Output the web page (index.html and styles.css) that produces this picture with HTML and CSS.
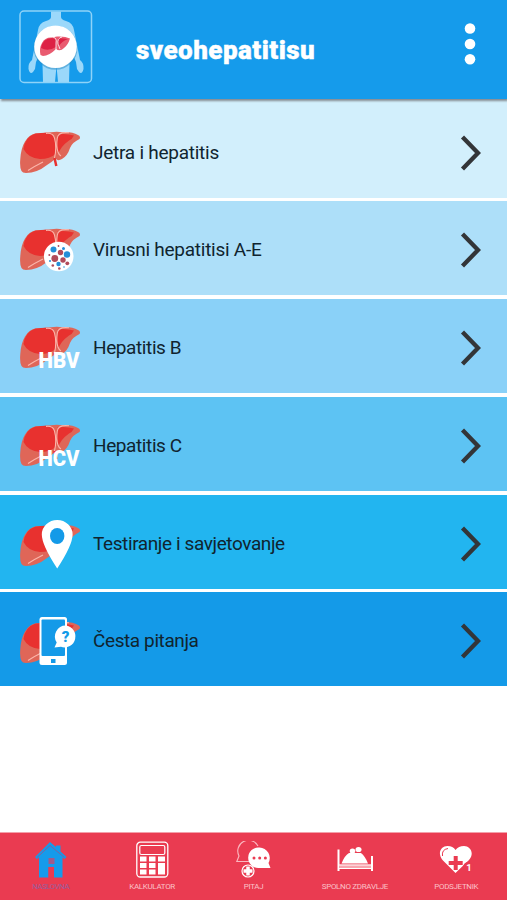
FILE: index.html
```html
<!DOCTYPE html>
<html lang="hr">
<head>
<meta charset="utf-8">
<title>sveohepatitisu</title>
<link rel="stylesheet" href="styles.css">
</head>
<body>
<svg class="defs" width="0" height="0">
  <symbol id="liver" viewBox="0 0 60 50">
    <path fill="#df6658" d="M1.500 43Q-.5 39 .3 31Q1 20 5 13.500Q9 6.500 16 5.300Q27 4.900 31 4.200Q37 3.200 42 4.200Q52 3.500 58 7Q61 8.500 59.500 11Q52 14.500 50 20Q47.500 28 42 31Q38 33.500 35.500 30.500Q32 34 27 37Q17 45 6 45Q2.500 45 1.500 43Z"/>
    <path fill="#e8312f" d="M3.500 21Q5 9 15 5.700Q27 4 32 5.500Q35.500 9 35.500 15V26Q30 31 20 31Q8 30 3.500 21ZM37.500 6.500Q45 5 54 7.500Q52 11.500 49 12.500Q40 19 38.500 26Q36 15 37.500 6.500Z"/>
    <path fill="none" stroke="#e8312f" stroke-width="2.500" d="M34.500 30L36.300 38"/>
    <path fill="none" stroke="#fbb5aa" stroke-width="1.100" d="M26 5.400Q33 4.600 34.500 10Q37 19 34.500 30M49 4.800Q38 3.600 37.300 10Q36 19 38 24Q39 27 41 28M8 42.500Q14 38.500 23 34"/>
  </symbol>
  <symbol id="arrow" viewBox="0 0 22 36">
    <path fill="none" stroke="#333538" stroke-width="4.300" d="M2.500 2L18 18L2.500 34"/>
  </symbol>
</svg>
<header class="header">
  <svg class="logo" viewBox="0 0 74 74">
    <g fill="#9bd8fa">
      <path d="M32 1.500H42V7Q42 9.500 47 11Q54 13 55 20L57 30L61 50Q65 53 64.500 59Q63 65 60 62L58 59L57 52L51 38L50.500 54L50 72H39L37.500 56L36 72H24L23.500 54L23 38L17 52L16 59L14 62Q11 65 9.500 59Q9 53 13 50L17 30L19 20Q20 13 27 11Q32 9.500 32 7Z"/>
    </g>
    <rect x="1" y="1" width="71.500" height="71.500" rx="4" fill="none" stroke="#8fd3f8" stroke-width="1.500"/>
    <circle cx="36.500" cy="37.800" r="22" fill="#3192c8" opacity=".55"/>
    <circle cx="36.500" cy="36.800" r="21.300" fill="#fff"/>
    <path fill="#e95b70" d="M21.500 45Q20 38 23 33Q26 27 33 27.500L38 26.500Q46 26 51 28.500Q49 35 45 38Q41 42 37 39Q30 46 24 46Z"/>
    <path fill="#dd2144" d="M22 38Q24 28 33 28L37 29V37Q29 42 22 38ZM39 28L49 29Q43 31 39 37Z"/>
    <path fill="none" stroke="#fff" stroke-width=".8" d="M34 27Q38 28 37 33V42M43 27Q38 28 39 34L41 39"/>
  </svg>
  <h1 class="title">sveohepatitisu</h1>
  <svg class="more" viewBox="0 0 12 42"><g fill="#fff"><circle cx="6" cy="5.500" r="5.300"/><circle cx="6" cy="21" r="5.300"/><circle cx="6" cy="36.200" r="5.300"/></g></svg>
</header>
<main class="menu">
  <a class="row row-1">
    <svg class="icon" viewBox="0 0 60 50"><use href="#liver"/></svg>
    <span class="label">Jetra i hepatitis</span>
    <svg class="arrow"><use href="#arrow"/></svg>
  </a>
  <a class="row row-2">
    <svg class="icon" viewBox="0 0 60 50"><use href="#liver"/>
      <circle cx="38.700" cy="31.500" r="14.800" fill="#fff"/>
      <g fill="#238fd8"><circle cx="33.500" cy="24.500" r="3"/><circle cx="47" cy="29.500" r="3.200"/><circle cx="38.500" cy="39" r="2.200"/><circle cx="43.500" cy="23.500" r="1.500"/><circle cx="30" cy="36" r="1"/><circle cx="44" cy="42" r=".8"/></g>
      <g fill="#b14b5a"><circle cx="34.800" cy="33.500" r="3.400"/><circle cx="40.500" cy="27.500" r="2.700"/><circle cx="43" cy="35" r="2.700"/><circle cx="47.300" cy="38.300" r="1.900"/><circle cx="32.800" cy="40.500" r="1.300"/><circle cx="39.300" cy="43.500" r="1.300"/><circle cx="29.300" cy="30" r="1"/><circle cx="38.500" cy="21" r=".9"/></g>
    </svg>
    <span class="label">Virusni hepatitisi A-E</span>
    <svg class="arrow"><use href="#arrow"/></svg>
  </a>
  <a class="row row-3">
    <svg class="icon" viewBox="0 0 60 50"><use href="#liver"/><text class="tag" x="18.500" y="45" textLength="41" lengthAdjust="spacingAndGlyphs">HBV</text></svg>
    <span class="label tight">Hepatitis B</span>
    <svg class="arrow"><use href="#arrow"/></svg>
  </a>
  <a class="row row-4">
    <svg class="icon" viewBox="0 0 60 50"><use href="#liver"/><text class="tag" x="18.500" y="45" textLength="41" lengthAdjust="spacingAndGlyphs">HCV</text></svg>
    <span class="label tight">Hepatitis C</span>
    <svg class="arrow"><use href="#arrow"/></svg>
  </a>
  <a class="row row-5">
    <svg class="icon" viewBox="0 0 60 50"><use href="#liver" y="2"/>
      <path fill="#fff" d="M37.200 49.500Q21.800 26 21.800 15.500A15.400 14.500 0 0 1 52.600 15.500Q52.600 26 37.200 49.500Z"/>
      <ellipse cx="37.200" cy="17" rx="7.200" ry="8" fill="#149ae8"/>
    </svg>
    <span class="label tight">Testiranje i savjetovanje</span>
    <svg class="arrow"><use href="#arrow"/></svg>
  </a>
  <a class="row row-6">
    <svg class="icon" viewBox="0 0 60 50"><use href="#liver" y="2"/>
      <rect x="19.500" y="1" width="27.500" height="48" rx="2.500" fill="#fff"/>
      <rect x="21.500" y="3.500" width="23.500" height="36.500" rx="1" fill="#149ae8"/>
      <rect x="31" y="43" width="4.500" height="4" fill="#149ae8"/>
      <path fill="#fff" d="M45.800 9.500A10.800 11 0 1 1 41 30.800L34.500 31.500L36.700 26.500A10.800 11 0 0 1 45.800 9.500Z"/>
      <text class="question" x="45.700" y="26">?</text>
    </svg>
    <span class="label tight">Česta pitanja</span>
    <svg class="arrow"><use href="#arrow"/></svg>
  </a>
</main>
<nav class="tabs">
  <a class="tab active">
    <svg class="tab-icon" viewBox="0 0 36 38"><path fill="#159beb" d="M17 1L23 6V4.500H27.500V10.500L33.500 16L31.500 18L29.500 16.500V36.500H21V26H15.500V36.500H6V16.500L4 18L2 16L17 1Z"/><path fill="none" stroke="#a64a80" stroke-width=".7" d="M4 16.500L17 4.500L31.500 16.500"/><path fill="#a05a8d" d="M15.500 17H21.500V23H15.500Z"/><path fill="#ea3b51" d="M15.500 26H21V36.500H15.500Z"/></svg>
    <span class="tab-label">NASLOVNA</span>
  </a>
  <a class="tab">
    <svg class="tab-icon" viewBox="0 0 36 38"><rect x="2.800" y="1.200" width="31" height="34.800" rx="3.500" fill="none" stroke="#fff" stroke-width="1.300"/><rect x="5.800" y="4.500" width="25" height="9" rx="1.500" fill="none" stroke="#fff" stroke-width="1.200"/><g fill="#fff"><path d="M6 15.500h6.500v5h-6.500zM15 15.500h6.500v5h-6.500zM24 15.500h7v5h-7zM6 22h6.500v5h-6.500zM15 22h6.500v5h-6.500zM6 28.500h6.500v5h-6.500zM15 28.500h6.500v5h-6.500zM24 22h7v11.500h-7z"/></g></svg>
    <span class="tab-label">KALKULATOR</span>
  </a>
  <a class="tab">
    <svg class="tab-icon" viewBox="0 0 36 38"><path fill="none" stroke="#fbb7bf" stroke-width="1.100" d="M23 5A10.500 10.500 0 0 0 4 15L1.800 20.500H14"/><path fill="#fff" d="M24.500 6.500A10.500 10.500 0 0 1 33.500 22L35.500 27H24.500A10.300 10.300 0 1 1 24.500 6.500Z"/><g fill="#ea3b51"><circle cx="19" cy="17" r="1.500"/><circle cx="24.700" cy="17" r="1.500"/><circle cx="30.400" cy="17" r="1.500"/></g><circle cx="13" cy="30" r="6" fill="none" stroke="#fff" stroke-width="1.200"/><path stroke="#fff" stroke-width="3.500" d="M13 25.500V34.500M8.500 30H17.500"/></svg>
    <span class="tab-label">PITAJ</span>
  </a>
  <a class="tab">
    <svg class="tab-icon" viewBox="0 0 36 38"><path fill="none" stroke="#fff" stroke-width="2" d="M1.500 8.500V30M35 15V30"/><path fill="#f8a5ae" d="M2 23.500H34V28H2Z"/><path fill="none" stroke="#fff" stroke-width="1" d="M2 24H34M2 27.500H34"/><path fill="#fff" d="M4.500 22.500Q8 14 12 12H24Q28 15 31 22.500Z"/><ellipse cx="15.500" cy="10" rx="2.800" ry="2.500" fill="#fff"/><ellipse cx="21.500" cy="8.500" rx="3" ry="2.600" fill="#fff"/></svg>
    <span class="tab-label">SPOLNO ZDRAVLJE</span>
  </a>
  <a class="tab">
    <svg class="tab-icon" viewBox="0 0 36 38"><path fill="#fff" d="M17.500 32L4.500 19C-1 12 3 5 9.500 5Q15 5 17.500 9Q20.500 5 26 5C32 5 37 12 31 19Z"/><path fill="none" stroke="#ea3b51" stroke-width="1" d="M4.500 15Q3.500 8.500 10 7.500"/><path stroke="#ea3b51" stroke-width="4" d="M17.700 15V29M10.700 22H24.700"/><circle cx="30.500" cy="26" r="5.300" fill="#ea3b51"/><text class="count" x="31" y="29.500">1</text></svg>
    <span class="tab-label">PODSJETNIK</span>
  </a>
</nav>
</body>
</html>
```
FILE: styles.css
```css
* { box-sizing: border-box; }
body {
  margin: 0;
  width: 507px;
  height: 900px;
  display: flex;
  flex-direction: column;
  overflow: hidden;
  background: #fff;
  font-family: Roboto, "Liberation Sans", sans-serif;
}
.defs { display: none; }
.header {
  position: relative;
  flex: none;
  height: 99px;
  padding: 0 31px 0 19px;
  display: flex;
  align-items: flex-start;
  background: #159beb;
  box-shadow: 1px 2px 2px #858b92;
}
.logo { width: 74px; height: 74px; margin-top: 10px; }
.title {
  margin: 35px 0 0 43px;
  color: #fff;
  font-size: 26px;
  line-height: 30px;
  font-weight: 900;
  letter-spacing: .45px;
  -webkit-text-stroke: .4px #fff;
}
.more { width: 12px; height: 42px; margin: 23px 0 0 auto; }
.menu { flex: none; display: flex; flex-direction: column; gap: 3.8px; }
.row {
  height: 94px;
  padding: 4px 25px 0 20px;
  display: flex;
  align-items: center;
}
.row-1 { height: 98.500px; padding-top: 8.500px; background: #d2effc; }
.row-2 { background: #addff9; }
.row-3 { background: #8ad1f8; }
.row-4 { background: #5dc3f3; }
.row-5 { background: #22b5f0; }
.row-6 { background: #149ae8; }
.icon { flex: none; width: 60px; height: 50px; overflow: visible; }
.label {
  margin-left: 13px;
  color: #10242f;
  font-size: 19px;
  line-height: 24px;
  letter-spacing: -.25px;
  white-space: nowrap;
}
.label.tight { letter-spacing: -.4px; }
.arrow { width: 22px; height: 36px; margin-left: auto; }
.tag { fill: #fff; font-size: 21.500px; font-weight: 900; }
.question { fill: #149ae8; font-size: 15px; font-weight: 900; text-anchor: middle; }
.tabs {
  flex: none;
  height: 68px;
  margin-top: auto;
  display: grid;
  grid-template-columns: repeat(5, 1fr);
  border-top: 1px solid #f3a0aa;
  background: #ea3b51;
}
.tab { display: flex; flex-direction: column; align-items: center; padding-top: 8px; }
.tab-icon { width: 36px; height: 38px; }
.tab-label {
  margin-top: 2px;
  color: #fbc0c7;
  font-size: 8px;
  line-height: 11px;
  letter-spacing: -.32px;
  white-space: nowrap;
}
.active .tab-label { color: #995f9c; letter-spacing: -.55px; }
.count { fill: #fff; font-size: 9.500px; font-weight: 700; text-anchor: middle; }
```
